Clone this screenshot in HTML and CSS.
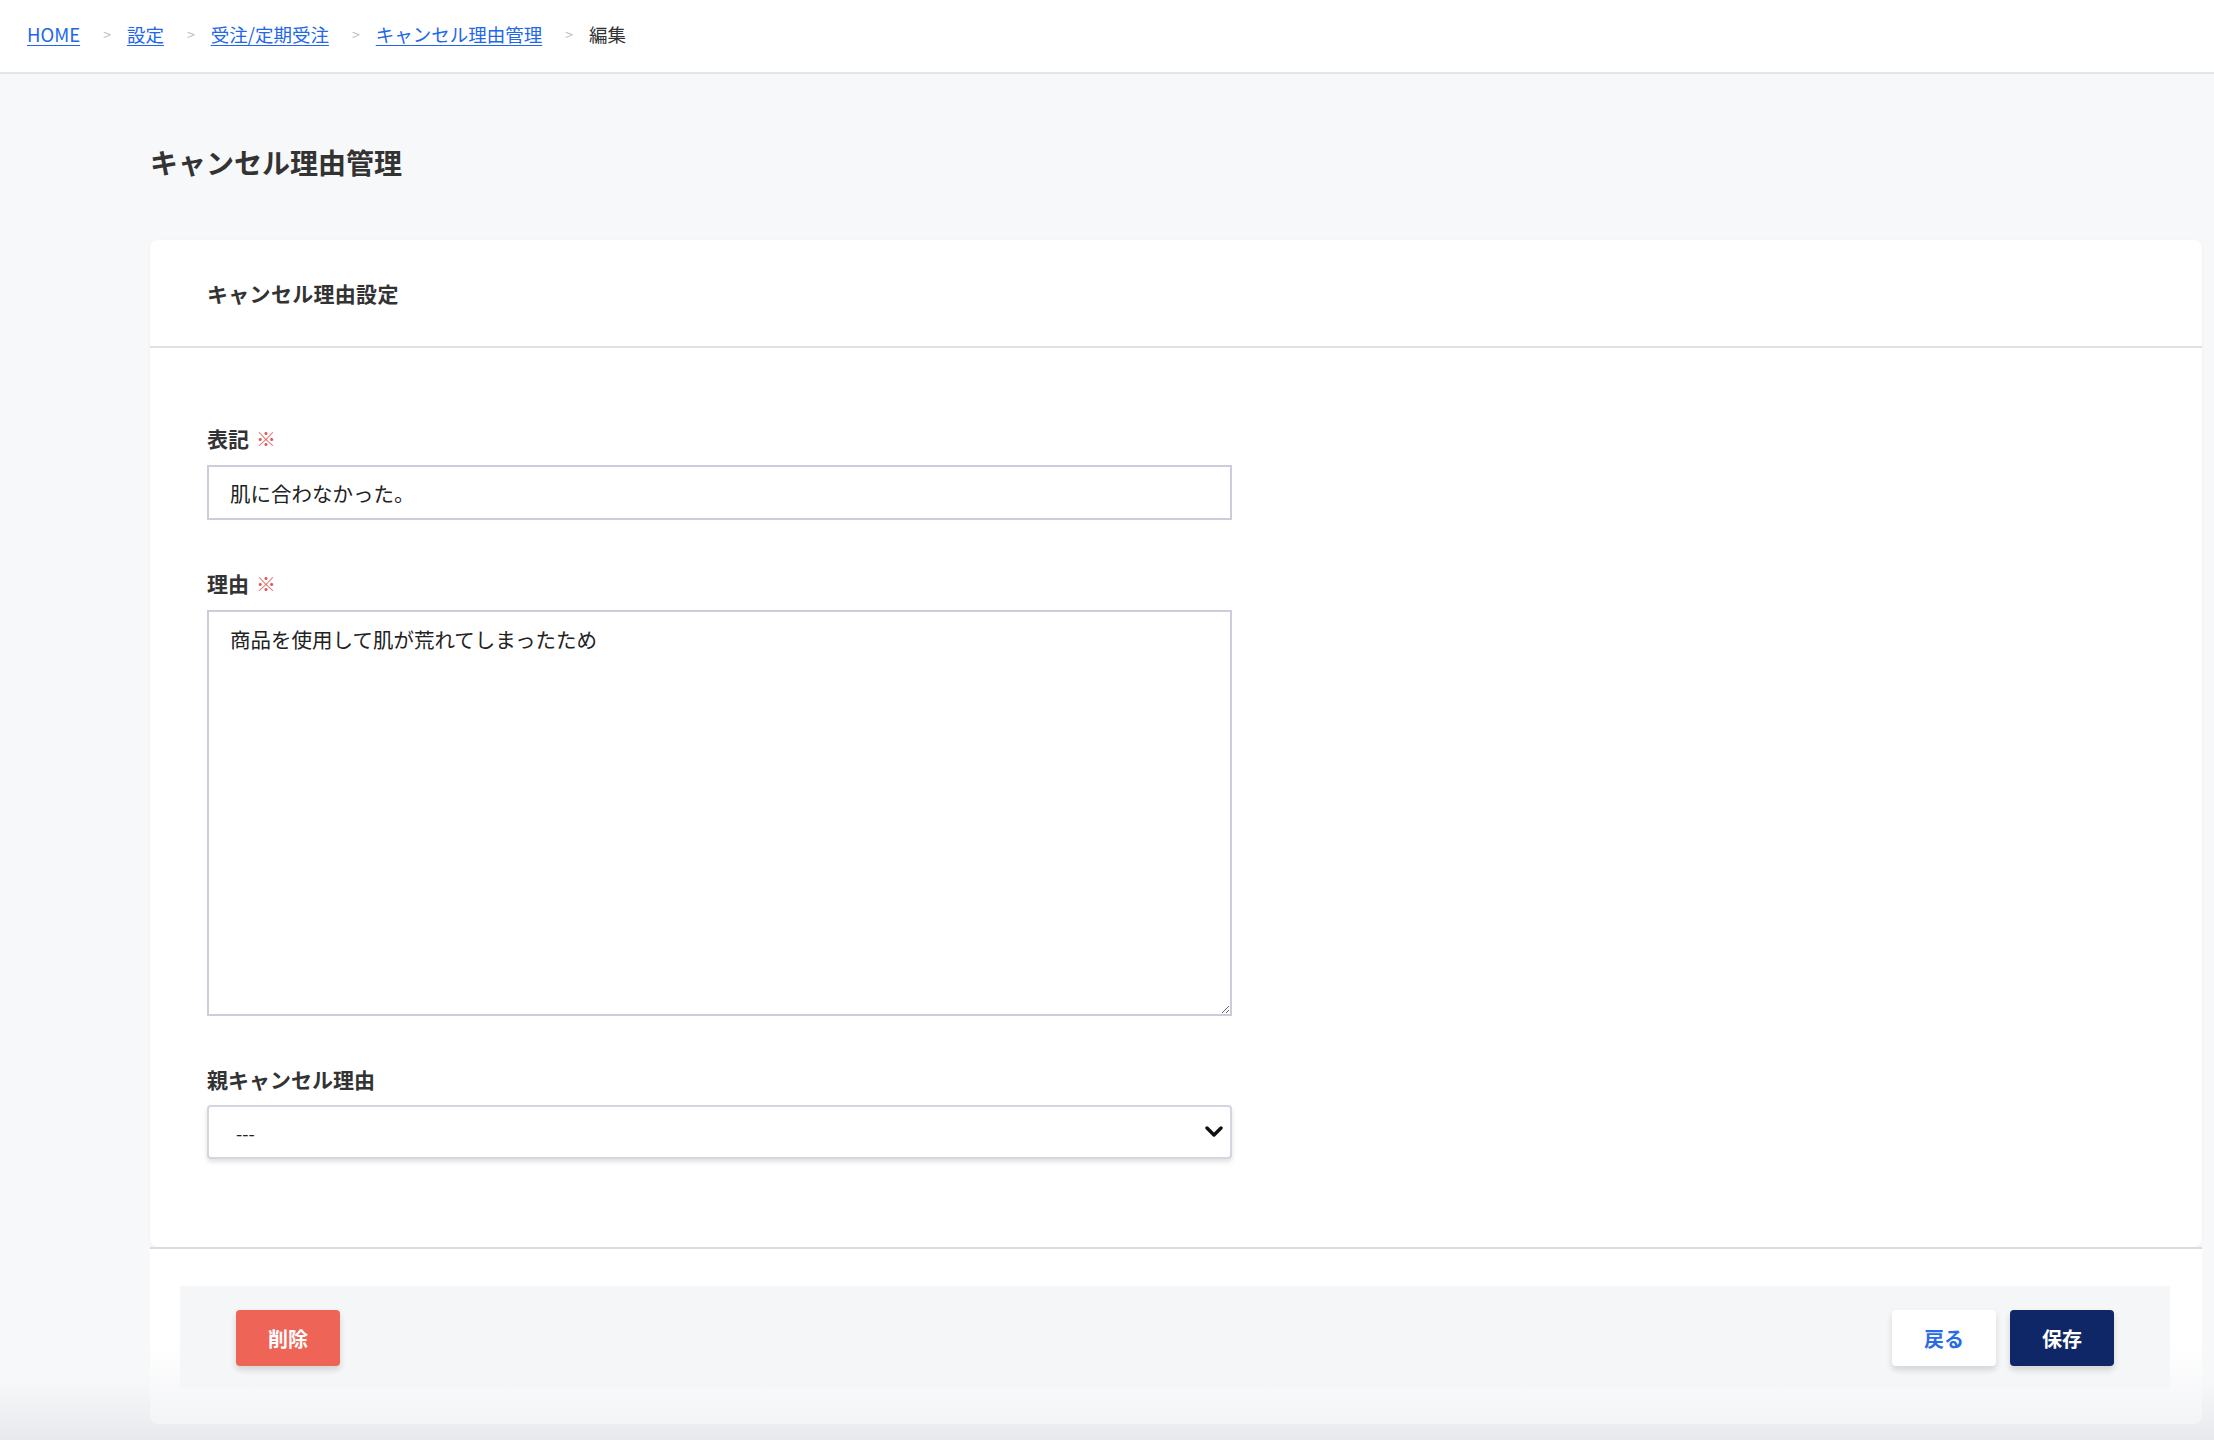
FILE: index.html
```html
<!DOCTYPE html>
<html lang="ja">
<head>
    <meta charset="UTF-8" />
    <meta name="viewport" content="width=device-width, initial-scale=1.0" />
    <title>キャンセル理由管理</title>
    <link rel="stylesheet" href="styles.css">
</head>
<body>
    <header class="topbar">
        <nav class="breadcrumb">
            <a href="#">HOME</a>
            <span class="sep">&gt;</span>
            <a href="#">設定</a>
            <span class="sep">&gt;</span>
            <a href="#">受注/定期受注</a>
            <span class="sep">&gt;</span>
            <a href="#">キャンセル理由管理</a>
            <span class="sep">&gt;</span>
            <span class="current">編集</span>
        </nav>
    </header>

    <main class="page">
        <h1 class="page-title">キャンセル理由管理</h1>

        <section class="card">
            <div class="card-header">
                <h2>キャンセル理由設定</h2>
            </div>
            <div class="card-body">
                <div class="field">
                    <label for="label-input">表記<span class="required">※</span></label>
                    <input id="label-input" type="text" value="肌に合わなかった。">
                </div>
                <div class="field">
                    <label for="reason-input">理由<span class="required">※</span></label>
                    <textarea id="reason-input">商品を使用して肌が荒れてしまったため</textarea>
                </div>
                <div class="field">
                    <label for="parent-select">親キャンセル理由</label>
                    <div class="select-wrap">
                        <select id="parent-select">
                            <option>---</option>
                        </select>
                        <svg class="chevron" width="18" height="12" viewBox="0 0 18 12">
                            <path d="M2 2 L9 9 L16 2" fill="none" stroke="#111" stroke-width="3.4" stroke-linecap="round" stroke-linejoin="round"/>
                        </svg>
                    </div>
                </div>
            </div>
        </section>

        <footer class="card-footer">
            <div class="actions">
                <button class="btn btn-delete">削除</button>
                <div class="actions-right">
                    <button class="btn btn-back">戻る</button>
                    <button class="btn btn-save">保存</button>
                </div>
            </div>
        </footer>
    </main>
</body>
</html>
```

FILE: styles.css
```css
* {
    box-sizing: border-box;
}
body {
    margin: 0;
    font-family: "Noto Sans CJK JP", "Noto Sans", sans-serif;
    background-color: #f7f8fa;
    color: #333;
}

.topbar {
    height: 74px;
    background-color: #fff;
    border-bottom: 2px solid #e3e5e9;
    display: flex;
    align-items: center;
    padding: 0 0 4px 27px;
}
.breadcrumb {
    display: flex;
    align-items: center;
    font-size: 18.5px;
    line-height: 1;
}
.breadcrumb a {
    color: #2266ee;
    text-decoration: underline;
    text-underline-offset: 3px;
}
.breadcrumb .sep {
    color: #b9bcc3;
    font-size: 14px;
    margin: 0 16px 0 23px;
}
.breadcrumb .current {
    color: #333;
}

.page {
    padding: 68px 12px 17px 150px;
    background: linear-gradient(to bottom, #f7f8fa calc(100% - 60px), #e8e9ec 100%);
}
.page-title {
    margin: 0 0 58px;
    font-size: 28px;
    line-height: 40px;
    font-weight: 700;
    color: #333;
}

.card {
    background-color: #fff;
    border-radius: 8px;
    box-shadow: 0 1px 4px rgba(0, 0, 0, 0.04);
}
.card-header {
    padding: 37px 57px 37px;
    border-bottom: 2px solid #e2e2e4;
}
.card-header h2 {
    margin: 0;
    font-size: 21px;
    line-height: 32px;
    letter-spacing: 0.3px;
    font-weight: 700;
}
.card-body {
    padding: 75px 57px 88px;
}

.field + .field {
    margin-top: 48px;
}
.field label {
    display: block;
    font-size: 21px;
    line-height: 30px;
    font-weight: 700;
    margin-bottom: 11px;
}
.field .required {
    color: #e05a5a;
    font-weight: 400;
    font-size: 20px;
    margin-left: 7px;
}
.field input,
.field textarea,
.field select {
    display: block;
    width: 1025px;
    font-family: inherit;
    font-size: 20.5px;
    color: #222;
    border: 2px solid #cbcdda;
    background-color: #fff;
    outline: none;
}
.field input {
    height: 55px;
    padding: 0 21px;
}
.field textarea {
    height: 406px;
    padding: 12px 21px;
    line-height: 30px;
    resize: vertical;
}
.select-wrap {
    position: relative;
    width: 1025px;
}
.field select {
    height: 54px;
    padding: 2px 27px 0;
    font-size: 18px;
    color: #222;
    border-color: #d3d5e0;
    border-radius: 4px;
    box-shadow: 0 3px 5px rgba(0, 0, 0, 0.12);
    appearance: none;
    -webkit-appearance: none;
}
.chevron {
    position: absolute;
    right: 9px;
    top: 21px;
    pointer-events: none;
}

.card-footer {
    border-top: 2px solid #d9dbe0;
    border-radius: 0 0 8px 8px;
    background: linear-gradient(to bottom, #fff 55%, #f3f4f6 100%);
    padding: 37px 32px 35px 30px;
}
.actions {
    display: flex;
    justify-content: space-between;
    align-items: center;
    background-color: #f5f6f8;
    padding: 24px 56px 23px;
}
.actions-right {
    display: flex;
    gap: 14px;
}
.btn {
    height: 56px;
    padding: 0 32px;
    border: none;
    border-radius: 4px;
    font-family: inherit;
    font-size: 20px;
    font-weight: 700;
    cursor: pointer;
    box-shadow: 0 4px 6px rgba(0, 0, 0, 0.14);
}
.btn-delete {
    background-color: #ee6457;
    color: #fff;
}
.btn-back {
    background-color: #fff;
    color: #2a6be6;
}
.btn-save {
    background-color: #0f2767;
    color: #fff;
}
```
